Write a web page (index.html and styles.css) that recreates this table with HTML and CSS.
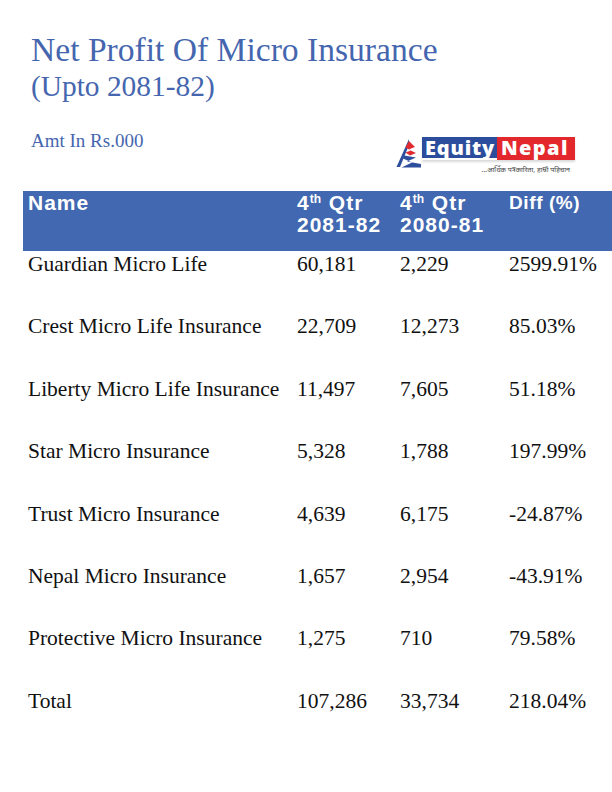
FILE: index.html
```html
<!DOCTYPE html>
<html lang="en">
<head>
<meta charset="utf-8">
<title>Net Profit Of Micro Insurance</title>
<link rel="stylesheet" href="styles.css">
</head>
<body>
<div class="page">
  <header class="heading">
    <h1 class="title">Net Profit Of Micro Insurance</h1>
    <p class="subtitle">(Upto 2081-82)</p>
  </header>
  <div class="meta">
    <p class="amt">Amt In Rs.000</p>
    <div class="logo">
      <svg class="logo-icon" viewBox="0 0 26 30" width="26" height="30" aria-hidden="true">
        <path d="M13 1 L0.5 29 L4 29 L13 7 Z" fill="#2d4e9c"/>
        <path d="M13 3 L19 9 L12.5 11.5 L20 15 L14 17.5 L9.5 14.5 L15 12.5 L9.5 9.5 Z" fill="#e02a2f"/>
        <path d="M8 17.5 L20 19.5 L11 23.5 L25 26 L25 29.5 L5.5 29.5 L16 24.5 L7 20.5 Z" fill="#2d4e9c"/>
      </svg>
      <div class="wordmark">
        <div class="boxes">
          <span class="box box-blue">Equity</span>
          <span class="box box-red">Nepal</span>
        </div>
        <span class="tagline">...आर्थिक पत्रकारिता, हाम्रो पहिचान</span>
      </div>
    </div>
  </div>
  <div class="table">
    <div class="row head">
      <div class="cell">Name</div>
      <div class="cell">4<sup>th</sup> Qtr<br>2081-82</div>
      <div class="cell">4<sup>th</sup> Qtr<br>2080-81</div>
      <div class="cell diff">Diff (%)</div>
    </div>
    <div class="row">
      <div class="cell">Guardian Micro Life</div>
      <div class="cell">60,181</div>
      <div class="cell">2,229</div>
      <div class="cell">2599.91%</div>
    </div>
    <div class="row">
      <div class="cell">Crest Micro Life Insurance</div>
      <div class="cell">22,709</div>
      <div class="cell">12,273</div>
      <div class="cell">85.03%</div>
    </div>
    <div class="row">
      <div class="cell">Liberty Micro Life Insurance</div>
      <div class="cell">11,497</div>
      <div class="cell">7,605</div>
      <div class="cell">51.18%</div>
    </div>
    <div class="row">
      <div class="cell">Star Micro Insurance</div>
      <div class="cell">5,328</div>
      <div class="cell">1,788</div>
      <div class="cell">197.99%</div>
    </div>
    <div class="row">
      <div class="cell">Trust Micro Insurance</div>
      <div class="cell">4,639</div>
      <div class="cell">6,175</div>
      <div class="cell">-24.87%</div>
    </div>
    <div class="row">
      <div class="cell">Nepal Micro Insurance</div>
      <div class="cell">1,657</div>
      <div class="cell">2,954</div>
      <div class="cell">-43.91%</div>
    </div>
    <div class="row">
      <div class="cell">Protective Micro Insurance</div>
      <div class="cell">1,275</div>
      <div class="cell">710</div>
      <div class="cell">79.58%</div>
    </div>
    <div class="row">
      <div class="cell">Total</div>
      <div class="cell">107,286</div>
      <div class="cell">33,734</div>
      <div class="cell">218.04%</div>
    </div>
  </div>
</div>
</body>
</html>
```
FILE: styles.css
```css
html, body {
  margin: 0;
  padding: 0;
  background: #ffffff;
}

.page {
  width: 612px;
  height: 792px;
  overflow: hidden;
  font-family: "Liberation Serif", "Times New Roman", serif;
}

.heading {
  padding: 32px 0 0 31px;
  color: #4566ae;
}

.title {
  margin: 0;
  font-weight: normal;
  font-size: 33.6px;
  line-height: 35px;
}

.subtitle {
  margin: 2px 0 0;
  font-size: 29.4px;
  line-height: 34px;
}

.meta {
  display: flex;
  align-items: flex-start;
  justify-content: space-between;
  height: 88px;
  padding-left: 31px;
  padding-right: 37px;
}

.amt {
  margin: 27px 0 0;
  font-size: 19px;
  line-height: 22px;
  color: #4566ae;
}

.logo {
  display: flex;
  align-items: flex-start;
  margin-top: 34px;
}

.logo-icon {
  display: block;
  margin-top: 1px;
}

.wordmark {
  display: flex;
  flex-direction: column;
  align-items: flex-end;
}

.boxes {
  display: flex;
  align-items: flex-start;
  box-shadow: 0 2px 2px rgba(0, 0, 0, 0.15);
}

.box {
  display: block;
  font-family: "Open Sans", "Liberation Sans", sans-serif;
  font-weight: 800;
  font-size: 20px;
  line-height: 21px;
  color: #ffffff;
  letter-spacing: 0.8px;
}

.box-blue {
  background: #2b4d9b;
  width: 75px;
  padding-left: 3px;
  box-sizing: border-box;
  height: 21px;
}

.box-red {
  background: #e2272d;
  width: 78px;
  padding-left: 4px;
  box-sizing: border-box;
  height: 23px;
  letter-spacing: 1.4px;
}

.tagline {
  margin-top: 5px;
  margin-right: 5px;
  font-family: "Noto Sans", "DejaVu Sans", sans-serif;
  font-size: 7px;
  line-height: 9px;
  color: #444444;
}

.table {
  margin-left: 23px;
  width: 589px;
}

.row {
  display: grid;
  grid-template-columns: 269px 103px 109px 108px;
  height: 62.4px;
  font-size: 21.5px;
  line-height: 26px;
  color: #111111;
}

.cell {
  padding-left: 5px;
  white-space: nowrap;
}

.head {
  height: 60px;
  box-sizing: border-box;
  padding-top: 1px;
  background: #4168b0;
  color: #ffffff;
  font-family: "Liberation Sans", Arial, sans-serif;
  font-weight: bold;
  font-size: 21px;
  line-height: 22px;
  letter-spacing: 1px;
}

.head sup {
  font-size: 12px;
  line-height: 0;
  vertical-align: 7px;
  letter-spacing: 0;
  margin-right: 1px;
}

.head .diff {
  font-size: 19px;
  letter-spacing: 0.6px;
}
```
